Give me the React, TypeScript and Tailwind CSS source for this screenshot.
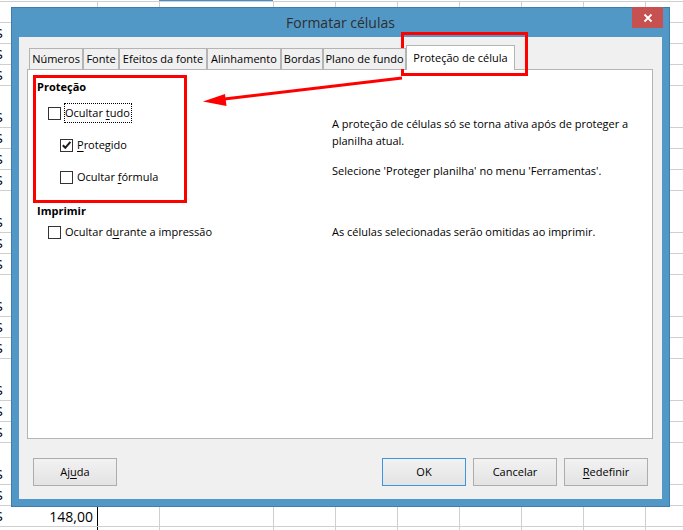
import type { ReactNode } from 'react';

const blankRows = [4, 9, 13, 17, 21];
const colWidths = [98, 62, 114, 62, 62, 62, 62, 62, 62, 62];

const tabs = [
  { label: 'Números', w: 'w-[54px]' },
  { label: 'Fonte', w: 'w-[36px]' },
  { label: 'Efeitos da fonte', w: 'w-[88px]' },
  { label: 'Alinhamento', w: 'w-[74px]' },
  { label: 'Bordas', w: 'w-[42px]' },
  { label: 'Plano de fundo', w: 'w-[83px]' },
];

function Sheet() {
  return (
    <div className="flex flex-col">
      <div className="h-[2px] border-b border-[#cfcfcf] flex">
        <div className="w-[159px]" />
        <div className="w-[114px] bg-[#3d8fd6]" />
      </div>
      {Array.from({ length: 26 }, (_, r) => (
        <div
          key={r}
          className={`h-[21px] flex shrink-0 ${blankRows.includes(r) ? '' : 'border-b border-[#cfcfcf]'}`}
        >
          {colWidths.map((w, c) => (
            <div
              key={c}
              style={{ width: w }}
              className={`shrink-0 h-full flex items-center border-r ${
                c === 0 && r >= 24 ? 'border-black' : 'border-[#cfcfcf]'
              } ${c === 0 ? 'justify-between pr-[4px]' : ''}`}
            >
              {c === 0 && r > 0 && !blankRows.includes(r) && (
                <span className="-ml-[5px] text-[14px] text-black">$</span>
              )}
              {c === 0 && r === 24 && <span className="text-[14px] text-black">148,00</span>}
            </div>
          ))}
        </div>
      ))}
    </div>
  );
}

function Check({ checked }: { checked?: boolean }) {
  return (
    <span className="w-[13px] h-[13px] border border-[#333] bg-white flex items-center justify-center shrink-0">
      {checked && (
        <svg width="11" height="11" viewBox="0 0 11 11">
          <path d="M1.8 5.2 L4.3 7.8 L9.4 1.8" fill="none" stroke="#1a1a1a" strokeWidth="2" />
        </svg>
      )}
    </span>
  );
}

function Opt({ children, checked, focus, className = '' }: { children: ReactNode; checked?: boolean; focus?: boolean; className?: string }) {
  return (
    <div className={`flex items-center h-[20px] ${className}`}>
      <Check checked={checked} />
      <span
        className={`ml-[3px] h-[20px] pr-px flex items-center border ${
          focus ? 'border-dotted border-black' : 'border-transparent'
        }`}
      >
        <span className="whitespace-pre">{children}</span>
      </span>
    </div>
  );
}

function Btn({ children, primary }: { children: ReactNode; primary?: boolean }) {
  return (
    <button
      className={`w-[84px] h-[28px] border bg-gradient-to-b from-[#f2f2f2] to-[#e3e3e3] text-black ${
        primary ? 'border-[#3c95e0]' : 'border-[#adadad]'
      }`}
    >
      {children}
    </button>
  );
}

function Dialog() {
  return (
    <div className="absolute left-[11px] top-[7px] w-[659px] h-[500px] bg-[#5298c6] border border-[#3f7dad] flex flex-col">
      <div className="h-[29px] relative flex items-center justify-center">
        <span className="text-[14px] text-[#2e2e2e] -mt-[1px]">Formatar células</span>
        <div className="absolute right-[6px] -top-[1px] w-[31px] h-[21px] bg-[#c75050] flex items-center justify-center">
          <svg width="10" height="10" viewBox="0 0 10 10">
            <path d="M1.5 1.5 L8.5 8.5 M8.5 1.5 L1.5 8.5" stroke="white" strokeWidth="1.8" />
          </svg>
        </div>
      </div>

      <div className="mx-[7px] mb-[7px] flex-1 bg-[#f0f0f0] flex flex-col pl-[8px] pr-[9px] pt-[8px] text-[11px] text-black">
        <div className="h-[24px] flex items-end ml-[2px] relative z-10">
          {tabs.map((t) => (
            <div
              key={t.label}
              className={`${t.w} h-[21px] border border-b-0 border-[#b4b4b4] bg-[#f0f0f0] flex items-center justify-center whitespace-nowrap`}
            >
              {t.label}
            </div>
          ))}
          <div className="w-[109px] h-[25px] -mb-px border border-b-0 border-[#b4b4b4] bg-white flex items-center justify-center whitespace-nowrap">
            Proteção de célula
          </div>
        </div>

        <div className="h-[370px] border border-[#b4b4b4] bg-white pl-[9px] flex flex-col">
          <div className="flex">
            <div className="w-[295px] flex flex-col pt-[9px]">
              <div className="h-[16px] font-bold leading-[16px]">Proteção</div>
              <Opt focus className="mt-[8px] ml-[11px]">
                Ocultar <u className="underline-offset-2">t</u>udo
              </Opt>
              <Opt checked className="mt-[12px] ml-[23px]">
                <u className="underline-offset-2">P</u>rotegido
              </Opt>
              <Opt className="mt-[12px] ml-[23px]">
                Ocultar <u className="underline-offset-2">f</u>órmula
              </Opt>
            </div>
            <div className="pt-[45px] leading-[17px] whitespace-nowrap">
              <p>
                A proteção de células só se torna ativa após de proteger a
                <br />
                planilha atual.
              </p>
              <p className="mt-[13px]">Selecione 'Proteger planilha' no menu 'Ferramentas'.</p>
            </div>
          </div>

          <div className="mt-[16px] h-[16px] font-bold leading-[16px]">Imprimir</div>
          <div className="mt-[3px] flex items-center">
            <div className="w-[295px]">
              <Opt className="ml-[11px]">
                Ocultar d<u className="underline-offset-2">u</u>rante a impressão
              </Opt>
            </div>
            <span className="whitespace-nowrap">As células selecionadas serão omitidas ao imprimir.</span>
          </div>
        </div>

        <div className="mt-[19px] flex items-center pl-[6px] pr-[5px]">
          <Btn>
            Aj<u className="underline-offset-2">u</u>da
          </Btn>
          <div className="ml-auto flex gap-[7px]">
            <Btn primary>OK</Btn>
            <Btn>Cancelar</Btn>
            <Btn>
              <u className="underline-offset-2">R</u>edefinir
            </Btn>
          </div>
        </div>
      </div>
    </div>
  );
}

function Annotations() {
  return (
    <svg className="absolute left-0 top-0 pointer-events-none" width="683" height="530" viewBox="0 0 683 530">
      <rect x="34.5" y="76.5" width="151" height="125" fill="none" stroke="#ff0000" strokeWidth="3" />
      <rect x="402.5" y="33.5" width="124" height="41" fill="none" stroke="#ff0000" strokeWidth="3" />
      <line x1="402" y1="78" x2="216" y2="100" stroke="#ff0000" strokeWidth="3" />
      <polygon points="203,101.5 225,94 226.5,106" fill="#ff0000" />
    </svg>
  );
}

export default function App() {
  return (
    <div className="relative w-[683px] h-[530px] overflow-hidden bg-white font-['Open_Sans',sans-serif]">
      <Sheet />
      <Dialog />
      <Annotations />
    </div>
  );
}
